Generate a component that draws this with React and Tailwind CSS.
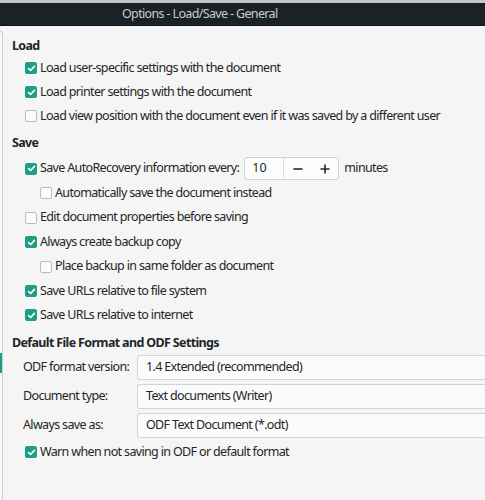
import React from 'react';

const Check = ({ checked }) => (
  <span
    className={`w-[12px] h-[12px] rounded-[2px] shrink-0 flex items-center justify-center ${
      checked ? 'bg-[#1f9e86] border border-[#1f9e86]' : 'bg-[#fcfcfc] border border-[#bcbcbc]'
    }`}
  >
    {checked && (
      <svg width="9" height="9" viewBox="0 0 9 9" fill="none">
        <path d="M1.6 4.6 L3.6 6.5 L7.4 2.4" stroke="white" strokeWidth="1.6" strokeLinecap="round" strokeLinejoin="round" />
      </svg>
    )}
  </span>
);

const Row = ({ checked, label, indent, h = 'h-[24px]', children }) => (
  <div className={`flex items-center ${h} ${indent ? 'pl-[37px]' : 'pl-[22px]'}`}>
    <Check checked={checked} />
    <span className="ml-[3px] whitespace-nowrap">{label}</span>
    {children}
  </div>
);

const Header = ({ children }) => (
  <div className="h-[20px] flex items-center pl-[9px] font-bold whitespace-nowrap">{children}</div>
);

const Combo = ({ label, value }) => (
  <div className="flex items-center h-[25px]">
    <span className="w-[134px] pl-[20px] whitespace-nowrap">{label}</span>
    <div className="flex-1 h-[25px] flex items-center pl-[8px] bg-[#fbfbfb] border border-r-0 border-[#d4d4d4] rounded-l-[3px] whitespace-nowrap">
      {value}
    </div>
  </div>
);

export default function App() {
  return (
    <div
      className="w-[485px] h-[500px] bg-[#f5f5f5] overflow-hidden flex flex-col text-[12.5px] tracking-[-0.65px] text-[#232627]"
      style={{ fontFamily: '"Noto Sans", "Open Sans", sans-serif' }}
    >
      {/* title bar */}
      <div className="border-t-[3px] border-[#c6c6c6] shrink-0">
        <div className="h-[23px] bg-[#1b2225] border-b border-[#101416] flex items-center pl-[122px] text-[#c9cccd] whitespace-nowrap">
          Options - Load/Save - General
        </div>
      </div>

      <div className="flex flex-1">
        {/* edge of tree panel */}
        <div className="w-[3px] mt-[5px] border-r border-t border-[#cfcfcf] rounded-tr-[3px] bg-[#f9f9f9] flex flex-col">
          <div className="h-[321px]" />
          <div className="h-[20px] w-[2px] bg-[#1f9e86]" />
        </div>

        <div className="flex-1 flex flex-col pt-[10px]">
          <Header>Load</Header>
          <Row checked label="Load user-specific settings with the document" />
          <Row checked label="Load printer settings with the document" />
          <Row label="Load view position with the document even if it was saved by a different user" />

          <div className="h-[5px]" />
          <Header>Save</Header>
          <div className="h-[3px]" />
          <Row checked label="Save AutoRecovery information every:" h="h-[25px]">
            <div className="ml-[5px] flex h-[23px] border border-[#d2d2d2] rounded-[3px] bg-[#fcfcfc] tracking-normal">
              <div className="w-[39px] flex items-center pl-[7px] border-r border-[#dedede]">10</div>
              <div className="w-[27px] flex items-center justify-center">
                <svg width="10" height="10" viewBox="0 0 10 10"><path d="M0.5 5 H9.5" stroke="#232627" strokeWidth="1.6" /></svg>
              </div>
              <div className="w-[27px] flex items-center justify-center">
                <svg width="10" height="10" viewBox="0 0 10 10"><path d="M0.5 5 H9.5 M5 0.5 V9.5" stroke="#232627" strokeWidth="1.6" /></svg>
              </div>
            </div>
            <span className="ml-[5px]">minutes</span>
          </Row>
          <Row indent label="Automatically save the document instead" />
          <Row label="Edit document properties before saving" h="h-[25px]" />
          <Row checked label="Always create backup copy" />
          <Row indent label="Place backup in same folder as document" h="h-[25px]" />
          <Row checked label="Save URLs relative to file system" />
          <Row checked label="Save URLs relative to internet" />

          <div className="h-[6px]" />
          <Header>Default File Format and ODF Settings</Header>
          <div className="h-[2px]" />
          <div className="flex flex-col gap-[4px]">
            <Combo label="ODF format version:" value="1.4 Extended (recommended)" />
            <Combo label="Document type:" value="Text documents (Writer)" />
            <Combo label="Always save as:" value="ODF Text Document (*.odt)" />
          </div>
          <div className="h-[2px]" />
          <Row checked label="Warn when not saving in ODF or default format" />
        </div>
      </div>
    </div>
  );
}
